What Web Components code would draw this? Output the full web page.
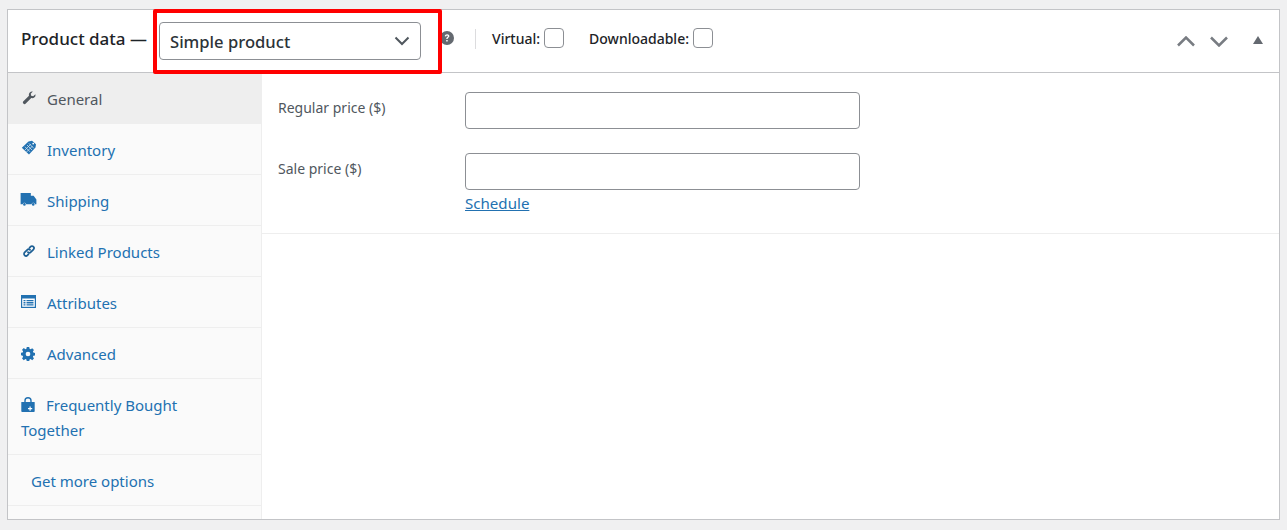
<!DOCTYPE html>
<html>
<head>
<meta charset="utf-8">
<title>Product data</title>
<style>
  html, body { margin: 0; height: 100%; }
  body {
    background: #f0f0f1;
    font-family: "Noto Sans", "Open Sans", sans-serif;
    color: #3c434a;
    overflow: hidden;
  }
</style>
</head>
<body>
<product-data-box>
  <tab-item slot="tabs" active label="General" icon="wrench"></tab-item>
  <tab-item slot="tabs" label="Inventory" icon="tag"></tab-item>
  <tab-item slot="tabs" label="Shipping" icon="truck"></tab-item>
  <tab-item slot="tabs" label="Linked Products" icon="link"></tab-item>
  <tab-item slot="tabs" label="Attributes" icon="attributes"></tab-item>
  <tab-item slot="tabs" label="Advanced" icon="gear"></tab-item>
  <tab-item slot="tabs" label="Frequently Bought Together" icon="bag" narrow></tab-item>
  <tab-item slot="tabs" label="Get more options" plain></tab-item>
  <price-field label="Regular price ($)"></price-field>
  <price-field label="Sale price ($)" schedule></price-field>
</product-data-box>

<script>
const ICONS = {
  wrench: `<svg style="margin:4px 0 0 1px" viewBox="0 0 16 16" width="14" height="14"><path fill="#50575e" d="M15.300 3.600c.3 1.200 0 2.600-1 3.500-1 1-2.400 1.300-3.700.9l-6.300 6.400c-.8.800-2 .8-2.700 0-.8-.8-.8-2 0-2.700L8 5.400C7.600 4.100 7.900 2.700 8.900 1.700c.9-1 2.300-1.300 3.500-1L10 3.200l.5 2.300 2.300.5z"/></svg>`,
  tag: `<svg style="margin:2px 0 0 0" viewBox="0 0 16 16" width="16" height="16"><path fill="#2271b1" d="M7.500 1.500L11 .8l4 3.500-.5 3.200-6.500 7L.8 7.800z"/><path stroke="#cfe0ee" stroke-width=".8" fill="none" d="M4 6.800l5 5M6 5l5 5M7.800 3.300l5 5M9.800 4.200l-6 6M11.500 6l-6 6"/><circle cx="12.200" cy="3.600" r=".9" fill="#fff"/></svg>`,
  truck: `<svg style="margin:4px 0 0 -1px" viewBox="0 0 17 14" width="17" height="13"><path fill="#2271b1" d="M0 0h11v3h3l3 4v5h-1.500a2 2 0 0 0-3.800 0H6a2 2 0 0 0-3.800 0H0z"/><circle cx="4.100" cy="12.300" r="1.400" fill="#2271b1"/><circle cx="13.600" cy="12.300" r="1.400" fill="#2271b1"/></svg>`,
  link: `<svg style="margin:4px 0 0 1px" viewBox="0 0 16 16" width="14" height="14"><g fill="none" stroke="#1d5f94" stroke-width="2" stroke-linecap="round"><path d="M6.800 9.300c1 1 2.300.9 3.200 0l3-3c.9-.9.9-2.300 0-3.200s-2.300-.9-3.200 0L8.600 4.300"/><path d="M9.200 6.700c-1-1-2.300-.9-3.200 0l-3 3c-.9.900-.9 2.300 0 3.200s2.300.9 3.200 0l1.200-1.200"/></g></svg>`,
  attributes: `<svg style="margin:4px 0 0 0" viewBox="0 0 15 13" width="15" height="13"><path fill="#2271b1" d="M0 0h15v13H0z"/><path fill="#fff" d="M1.200 3.500h12.600v8.300H1.200z"/><path fill="#2271b1" d="M2.500 5h2v1.300h-2zM2.500 7.100h2v1.300h-2zM2.500 9.200h2v1.300h-2zM5.500 5h7v1.300h-7zM5.500 7.100h7v1.300h-7zM5.500 9.200h7v1.300h-7z"/></svg>`,
  gear: `<svg style="margin:5px 0 0 0" viewBox="0 0 16 16" width="14" height="14"><path fill="#2271b1" fill-rule="evenodd" d="M6.600 0h2.800l.4 2.100 1.200.5 1.800-1.200 2 2-1.200 1.800.5 1.200 2.100.4v2.800l-2.100.4-.5 1.200 1.200 1.800-2 2-1.800-1.200-1.200.5-.4 2.100H6.600l-.4-2.100-1.200-.5-1.800 1.200-2-2 1.200-1.800-.5-1.200L-.2 9.400V6.600l2.100-.4.5-1.200-1.200-1.800 2-2L5 2.600l1.200-.5zM8 5.300a2.700 2.700 0 1 0 0 5.400 2.700 2.700 0 0 0 0-5.400z"/></svg>`,
  bag: `<svg style="margin:4px 0 0 0" viewBox="0 0 14 15" width="14" height="15"><path fill="none" stroke="#2271b1" stroke-width="1.400" d="M4 6V3.700a3 3 0 0 1 6 0V6"/><path fill="#2271b1" d="M.8 5h12.400c.3 0 .5.200.5.500V14c0 .5-.4 1-1 1H1.300c-.6 0-1-.5-1-1V5.500c0-.3.200-.5.500-.5z"/><path fill="#fff" d="M8.500 9.500h1.200v1.500h1.500v1.200H9.700v1.500H8.500v-1.500H7v-1.200h1.500z"/></svg>`
}

class ProductDataBox extends HTMLElement {
  constructor () {
    super()
    this.shadow = this.attachShadow({ mode: 'open' })
  }

  connectedCallback () {
    this.shadow.innerHTML = /*html*/`
      <style>
        :host {
          display: block;
          position: relative;
          box-sizing: border-box;
          width: 1273px;
          height: 511px;
          margin: 9px 0 0 7px;
          background: #fff;
          border: 1px solid #c3c4c7;
        }
        * { box-sizing: border-box; }
        .head {
          display: flex;
          align-items: center;
          height: 63px;
          border-bottom: 1px solid #c3c4c7;
          padding: 0 0 0 13px;
          color: #1d2327;
        }
        .title { font-size: 17px; font-weight: 500; margin-right: 12px; white-space: nowrap; position: relative; top: -3px; }
        .type {
          display: flex;
          align-items: center;
          justify-content: space-between;
          width: 262px;
          height: 38px;
          border: 1px solid #8c8f94;
          border-radius: 4px;
          padding: 0 10px;
          font-size: 16.6px;
          font-weight: 500;
          color: #2c3338;
        }
        .help { margin-left: 19px; display: flex; position: relative; top: -3px; }
        .sep { width: 1px; height: 20px; background: #dcdcde; margin: 0 16px 0 21px; position: relative; top: -2px; }
        .check { display: flex; align-items: center; font-size: 14px; font-weight: 500; margin-right: 25px; position: relative; top: -3px; }
        .check i {
          display: block;
          width: 20px;
          height: 20px;
          margin-left: 4px;
          border: 1px solid #8c8f94;
          border-radius: 4px;
        }
        .tools { margin-left: auto; display: flex; align-items: center; padding-right: 16px; gap: 15px; }
        .tri { margin: -3px 0 0 10px; }
        .body { display: flex; height: 446px; }
        .tabs {
          width: 254px;
          flex: none;
          background: #fafafa;
          border-right: 1px solid #eee;
        }
        .panel { flex: 1; min-width: 0; }
        .fields { padding: 9px 0 12px; border-bottom: 1px solid #eee; height: 161px; display: flex; flex-direction: column; }
        .mark {
          position: absolute;
          left: 145px;
          top: -1px;
          width: 289px;
          height: 65px;
          border: 4px solid #f00;
          border-radius: 2px;
          pointer-events: none;
        }
      </style>
      <div class="head">
        <span class="title">Product data —</span>
        <div class="type">
          <span>Simple product</span>
          <svg width="16" height="10" viewBox="0 0 16 10"><path d="M1.500 1.500L8 8l6.500-6.500" fill="none" stroke="#50575e" stroke-width="2"/></svg>
        </div>
        <span class="help">
          <svg width="14" height="14" viewBox="0 0 14 14"><circle cx="7" cy="7" r="7" fill="#646970"/><path d="M4.700 5.300C4.900 3.900 5.900 3.200 7.100 3.200c1.300 0 2.300.8 2.300 1.900 0 1.700-1.800 1.600-1.800 3H6.200c0-2 1.700-2 1.700-2.900 0-.4-.3-.7-.8-.7-.6 0-.9.300-1 1zM6.200 9h1.500v1.600H6.200z" fill="#fff"/></svg>
        </span>
        <span class="sep"></span>
        <label class="check">Virtual:<i></i></label>
        <label class="check">Downloadable:<i></i></label>
        <div class="tools">
          <svg width="18" height="11" viewBox="0 0 18 11"><path d="M1 9.500l8-8 8 8" fill="none" stroke="#787c82" stroke-width="2.500"/></svg>
          <svg width="18" height="11" viewBox="0 0 18 11"><path d="M1 1.500l8 8 8-8" fill="none" stroke="#787c82" stroke-width="2.500"/></svg>
          <svg class="tri" width="10" height="8" viewBox="0 0 10 8"><path d="M5 0l5 8H0z" fill="#646970"/></svg>
        </div>
      </div>
      <div class="body">
        <div class="tabs"><slot name="tabs"></slot></div>
        <div class="panel"><div class="fields"><slot></slot></div></div>
      </div>
      <div class="mark"></div>
    `
  }
}

class TabItem extends HTMLElement {
  constructor () {
    super()
    this.shadow = this.attachShadow({ mode: 'open' })
  }

  connectedCallback () {
    const label = this.getAttribute('label')
    const icon = ICONS[this.getAttribute('icon')] || ''
    this.shadow.innerHTML = /*html*/`
      <style>
        :host {
          display: block;
          box-sizing: border-box;
          border-bottom: 1px solid #eee;
          font-size: 15px;
          line-height: 25px;
          color: #2271b1;
          padding: 14px 13px 11px;
        }
        :host([active]) { background: #eee; color: #50575e; }
        :host([plain]) { padding-left: 23px; }
        :host([narrow]) .ico { width: 25px; }
        .row { display: block; max-width: 200px; }
        .ico { display: inline-block; width: 26px; height: 25px; vertical-align: top; }
        .ico svg { display: block; }
      </style>
      <span class="row">${icon ? `<span class="ico">${icon}</span>` : ''}${label}</span>
    `
  }
}

class PriceField extends HTMLElement {
  constructor () {
    super()
    this.shadow = this.attachShadow({ mode: 'open' })
  }

  connectedCallback () {
    const schedule = this.hasAttribute('schedule')
    this.shadow.innerHTML = /*html*/`
      <style>
        :host {
          display: grid;
          grid-template-columns: 187px 395px;
          padding: 10px 16px 14px;
          font-size: 14px;
          color: #50575e;
        }
        label { line-height: 19px; padding-top: 6px; }
        .box {
          height: 37px;
          border: 1px solid #8c8f94;
          border-radius: 4px;
          background: #fff;
          box-sizing: border-box;
        }
        a {
          color: #2271b1;
          text-decoration: underline;
          font-size: 15.100px;
          line-height: 20px;
          display: inline-block;
          margin-top: 3px;
        }
      </style>
      <label>${this.getAttribute('label')}</label>
      <div>
        <div class="box"></div>
        ${schedule ? '<a>Schedule</a>' : ''}
      </div>
    `
  }
}

customElements.define('product-data-box', ProductDataBox)
customElements.define('tab-item', TabItem)
customElements.define('price-field', PriceField)
</script>
</body>
</html>
